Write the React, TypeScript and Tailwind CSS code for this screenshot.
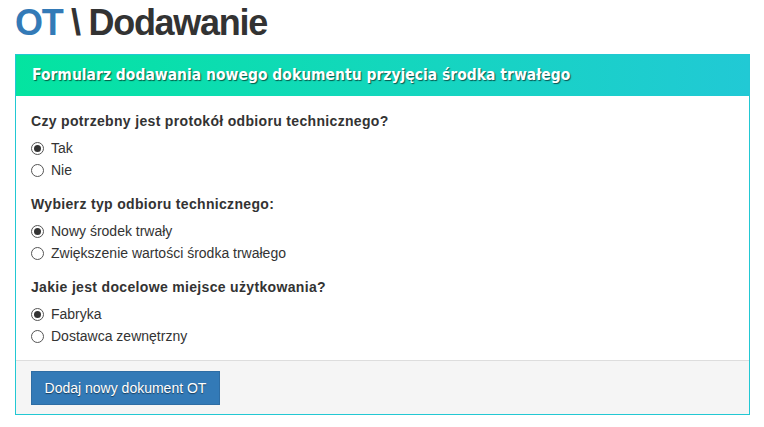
import React from "react";

function Radio({ checked, label }: { checked?: boolean; label: string }) {
  return (
    <div className="flex h-[22px] items-center">
      <span className="flex h-[13px] w-[13px] items-center justify-center rounded-full border border-[#555] bg-white">
        {checked && <span className="h-[7px] w-[7px] rounded-full bg-[#333]" />}
      </span>
      <span className="ml-[7px] text-[14px] leading-[20px] text-[#333]">{label}</span>
    </div>
  );
}

function Group({ q, options, last }: { q: string; options: { label: string; checked?: boolean }[]; last?: boolean }) {
  return (
    <div className={last ? "" : "mb-[13px]"}>
      <div className="mb-[6px] text-[14px] font-bold leading-[20px] tracking-[0.33px] text-[#333]">{q}</div>
      {options.map((o) => (
        <Radio key={o.label} label={o.label} checked={o.checked} />
      ))}
    </div>
  );
}

export default function App() {
  return (
    <div className="min-h-[427px] w-[764px] bg-white px-[15px] pt-[3px]" style={{ fontFamily: '"Liberation Sans", Arial, sans-serif' }}>
      <h1 className="mb-[11px] text-[36px] font-bold leading-[40px] tracking-[-1.3px] text-[#333]">
        <span className="text-[#337ab7]">OT</span> \ Dodawanie
      </h1>
      <div className="w-[735px] border border-[#22c8d3]">
        <div
          className="flex h-[41px] items-center bg-gradient-to-r from-[#04e4a0] to-[#21c9d5] pl-[16px] text-[15.5px] font-bold text-white [text-shadow:1px_1px_1px_rgba(0,0,0,0.6)]"
          style={{ fontFamily: '"DejaVu Sans Condensed", "DejaVu Sans", sans-serif' }}
        >
          Formularz dodawania nowego dokumentu przyjęcia środka trwałego
        </div>
        <div className="px-[15px] pb-[13px] pt-[15px]">
          <Group
            q="Czy potrzebny jest protokół odbioru technicznego?"
            options={[{ label: "Tak", checked: true }, { label: "Nie" }]}
          />
          <Group
            q="Wybierz typ odbioru technicznego:"
            options={[{ label: "Nowy środek trwały", checked: true }, { label: "Zwiększenie wartości środka trwałego" }]}
          />
          <Group
            q="Jakie jest docelowe miejsce użytkowania?"
            options={[{ label: "Fabryka", checked: true }, { label: "Dostawca zewnętrzny" }]}
            last
          />
        </div>
        <div className="border-t border-[#ddd] bg-[#f5f5f5] px-[15px] pb-[9px] pt-[10px]">
          <button className="h-[34px] w-[189px] border border-[#2e6da4] bg-[#337ab7] text-[14px] text-white [text-shadow:0_1px_1px_rgba(0,0,0,0.5)]">
            Dodaj nowy dokument OT
          </button>
        </div>
      </div>
    </div>
  );
}
